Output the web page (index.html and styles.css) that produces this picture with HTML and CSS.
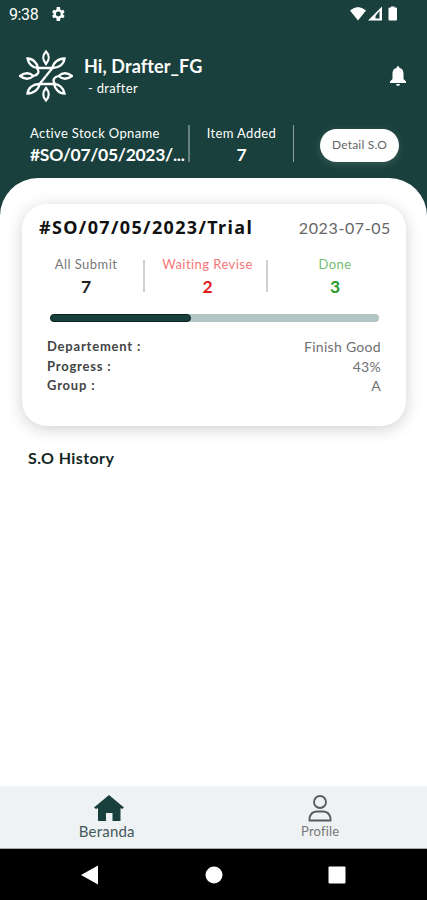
FILE: index.html
```html
<!DOCTYPE html>
<html lang="id">
<head>
    <meta charset="UTF-8">
    <meta name="viewport" content="width=device-width, initial-scale=1.0">
    <title>Stock Opname - Beranda</title>
    <link rel="stylesheet" href="styles.css">
</head>
<body>
    <div class="container">
        <header>
            <div class="status-bar">
                <span class="time">9:38</span>
                <svg class="gear" width="14" height="14" viewBox="2 2 20 20"><path fill="#fff" fill-rule="evenodd" d="M19.4 13c.1-.6.1-1.300 0-2l2.100-1.600-2-3.500-2.500 1a7.500 7.500 0 0 0-1.700-1L14.900 2h-4.800l-.4 3.900a7.500 7.500 0 0 0-1.700 1l-2.500-1-2 3.500L5.600 11a8 8 0 0 0 0 2l-2.100 1.600 2 3.500 2.500-1q.8.6 1.700 1l.4 3.900h4.800l.4-3.900q.9-.4 1.700-1l2.500 1 2-3.500zM12.500 8.500a3.500 3.500 0 1 1 0 7 3.500 3.500 0 0 1 0-7z"/></svg>
                <svg class="signals" width="49" height="18" viewBox="0 0 49 18" fill="#fff">
                    <path d="M0 5.500Q8 -1.500 16 5.500L8 15.500z"/>
                    <path d="M18 15.500L32 1.500V15.500z"/>
                    <path fill="#19403c" d="M25.500 13.500V11L29.500 6V13.500z"/>
                    <path d="M41 1.500h3.500v1h1.500q1 0 1 1v11q0 1-1 1h-6.500q-1 0-1-1v-11q0-1 1-1H41z"/>
                </svg>
            </div>

            <div class="greeting">
                <svg class="logo" width="54" height="54" viewBox="-27 -27 54 54" fill="none" stroke="#fff" stroke-width="2.300">
                    <g id="half">
                        <path d="M0-12C-3.500-16-3.500-21 0-24.500C3.500-21 3.500-16 0-12z"/>
                        <path d="M-8-8C-13-8-17.500-12-18.500-17.500C-13-17.500-9-13-8-8H6.500L0 0"/>
                        <path d="M6.500-8C7-13 12-17.500 18.500-17.500C18-12 13-8 6.500-8"/>
                        <path d="M-12.500 0C-17-4-22-3-26 0C-22 3-17 4-12.500 0C-8-1-6-4-9-8"/>
                    </g>
                    <use href="#half" transform="rotate(180)"/>
                </svg>
                <div class="user">
                    <h1>Hi, Drafter_FG</h1>
                    <p>- drafter</p>
                </div>
                <svg class="bell" width="16" height="20" viewBox="0 0 16 20" fill="#fff"><path d="M8 0q1.300 0 1.300 1.700C12.500 2.500 13.500 5 13.500 8v5l2.500 2.500V17H0v-1.500L2.500 13V8c0-3 1-5.500 4.200-6.300Q6.700 0 8 0zM6 18h4q-.3 2-2 2t-2-2z"/></svg>
            </div>

            <div class="summary">
                <div class="summary-item active-so">
                    <span>Active Stock Opname</span>
                    <strong>#SO/07/05/2023/...</strong>
                </div>
                <div class="summary-item added">
                    <span>Item Added</span>
                    <strong>7</strong>
                </div>
                <button class="detail-btn">Detail S.O</button>
            </div>
        </header>

        <main>
            <section class="card">
                <div class="card-header">
                    <h2>#SO/07/05/2023/Trial</h2>
                    <span class="date">2023-07-05</span>
                </div>
                <div class="counts">
                    <div class="count">
                        <span>All Submit</span>
                        <strong>7</strong>
                    </div>
                    <div class="count revise">
                        <span>Waiting Revise</span>
                        <strong>2</strong>
                    </div>
                    <div class="count done">
                        <span>Done</span>
                        <strong>3</strong>
                    </div>
                </div>
                <div class="progress">
                    <div class="progress-fill" style="width: 43%"></div>
                </div>
                <dl class="details">
                    <div><dt>Departement :</dt><dd>Finish Good</dd></div>
                    <div><dt>Progress :</dt><dd>43%</dd></div>
                    <div><dt>Group :</dt><dd>A</dd></div>
                </dl>
            </section>
            <h3>S.O History</h3>
        </main>

        <nav class="bottom-nav">
            <a href="#" class="active">
                <svg width="30" height="26" viewBox="0 0 30 26"><path fill="#19403c" d="M15 0L30 12.500L28 14L26.500 13V26H18.500V18H12V26H4V13L2 14L0 12.500z"/></svg>
                <span>Beranda</span>
            </a>
            <a href="#">
                <svg width="24" height="27" viewBox="0 0 24 27" fill="none" stroke="#555a5e" stroke-width="1.800"><circle cx="12" cy="7" r="6"/><path d="M1.500 25.500V23Q3 16.500 9 16.500h6Q21 16.500 22.500 23V25.500z"/></svg>
                <span>Profile</span>
            </a>
        </nav>

        <div class="system-nav">
            <svg width="18" height="20" viewBox="0 0 18 20"><path fill="#fff" d="M17 .5V19.500L0 10z"/></svg>
            <svg width="18" height="18" viewBox="0 0 18 18"><circle fill="#fff" cx="9" cy="9" r="8.500"/></svg>
            <svg width="18" height="18" viewBox="0 0 18 18"><rect fill="#fff" x=".5" y=".5" width="17" height="17" rx="1"/></svg>
        </div>
    </div>
</body>
</html>
```
FILE: styles.css
```css
* {
    margin: 0;
    padding: 0;
    box-sizing: border-box;
    font-family: 'Lato', sans-serif;
}
body {
    background-color: #19403c;
}
.container {
    width: 100%;
    height: 900px;
    display: flex;
    flex-direction: column;
    overflow: hidden;
}
header {
    height: 178px;
    color: white;
}
.status-bar {
    height: 28px;
    display: flex;
    align-items: center;
    padding: 0 28px 0 9px;
}
.status-bar .time {
    width: 42px;
    font-family: 'Roboto', sans-serif;
    font-size: 16px;
    letter-spacing: -0.4px;
}
.status-bar .signals {
    margin-left: auto;
}
.greeting {
    height: 75px;
    display: flex;
    align-items: center;
    padding: 20px 21px 0 19px;
}
.user {
    margin-left: 11px;
    margin-top: 2px;
}
h1 {
    font-size: 18px;
    line-height: 22px;
    letter-spacing: 0.1px;
    white-space: nowrap;
}
.user p {
    font-size: 13px;
    line-height: 22px;
    letter-spacing: 0.3px;
    padding-left: 4px;
}
.bell {
    margin-left: auto;
}
.summary {
    display: flex;
    padding: 22px 28px 0 30px;
}
.summary-item {
    height: 37px;
    display: flex;
    flex-direction: column;
    white-space: nowrap;
}
.summary-item span {
    font-size: 13px;
    line-height: 16px;
    letter-spacing: 0.35px;
}
.summary-item strong {
    font-size: 17.5px;
    line-height: 28px;
    letter-spacing: -0.3px;
}
.active-so {
    width: 160px;
    border-right: 2px solid #66817e;
}
.added {
    width: 104px;
    align-items: center;
    border-right: 1px solid #8ca09e;
}
.detail-btn {
    width: 79px;
    height: 33px;
    margin: 4px 0 0 auto;
    border: none;
    border-radius: 17px;
    background-color: white;
    color: #666;
    font-size: 12px;
    letter-spacing: 0.2px;
    padding-bottom: 3px;
    box-shadow: 0 2px 8px rgba(255,255,255,0.15);
}
main {
    flex: 1;
    background-color: white;
    border-radius: 38px 38px 0 0;
    padding: 26px 21px 0 22px;
}
.card {
    height: 222px;
    border-radius: 25px;
    padding: 10px 16px 0 17px;
    background-color: white;
    box-shadow: 0 3px 16px rgba(0,0,0,0.19);
}
.card-header {
    display: flex;
    justify-content: space-between;
    align-items: center;
    height: 26px;
    white-space: nowrap;
}
h2 {
    font-family: 'Noto Sans', sans-serif;
    font-size: 18px;
    letter-spacing: 1.35px;
    color: #111;
}
.date {
    font-size: 16px;
    color: #666;
    letter-spacing: 0.6px;
    margin-right: -1px;
}
.counts {
    display: grid;
    grid-template-columns: 116px 123px 138px;
    margin: 12px 0 0 -12px;
}
.count {
    display: flex;
    flex-direction: column;
    align-items: center;
    position: relative;
    white-space: nowrap;
    color: #222;
}
.count:first-child {
    padding-left: 2px;
}
.count.revise {
    padding-left: 6px;
}
.count + .count::before {
    content: "";
    position: absolute;
    left: 0;
    top: 8px;
    width: 2px;
    height: 32px;
    background-color: #d0d0d0;
}
.count span {
    font-size: 13px;
    line-height: 25px;
    letter-spacing: 0.45px;
    color: #777;
}
.count strong {
    font-size: 17.5px;
    line-height: 19px;
}
.count.revise strong {
    color: #e31b1b;
}
.count.revise span {
    color: #f67575;
}
.count.done strong {
    color: #2b9b2b;
}
.count.done span {
    color: #75bc75;
}
.progress {
    height: 8px;
    margin: 18px 11px 0;
    border-radius: 4px;
    background-color: #b3c4c5;
}
.progress-fill {
    height: 100%;
    border-radius: 4px;
    background-color: #19403c;
    border: 1px solid #08201d;
}
.details {
    padding: 15px 9px 0 8px;
}
.details div {
    display: flex;
    justify-content: space-between;
    line-height: 19.5px;
    white-space: nowrap;
}
dt {
    font-size: 13px;
    font-weight: bold;
    letter-spacing: 0.8px;
    color: #444;
}
dd {
    font-size: 14px;
    letter-spacing: 0.3px;
    color: #707070;
}
h3 {
    margin: 21px 0 0 6px;
    font-size: 16px;
    line-height: 22px;
    letter-spacing: 0.4px;
    color: #132825;
}
.bottom-nav {
    height: 63px;
    display: flex;
    background-color: #eff2f4;
    border-bottom: 1px solid #aaa;
}
.bottom-nav a {
    flex: 1;
    display: flex;
    flex-direction: column;
    align-items: center;
    padding-top: 9px;
    text-decoration: none;
    color: #777;
    font-size: 13px;
}
.bottom-nav a span {
    margin-top: 1px;
    letter-spacing: 0.2px;
}
.bottom-nav .active {
    color: #43595a;
    font-size: 15px;
}
.bottom-nav .active svg {
    margin-left: 5px;
}
.system-nav {
    height: 51px;
    display: flex;
    align-items: center;
    justify-content: space-between;
    padding: 0 81px;
    background-color: black;
}
```
